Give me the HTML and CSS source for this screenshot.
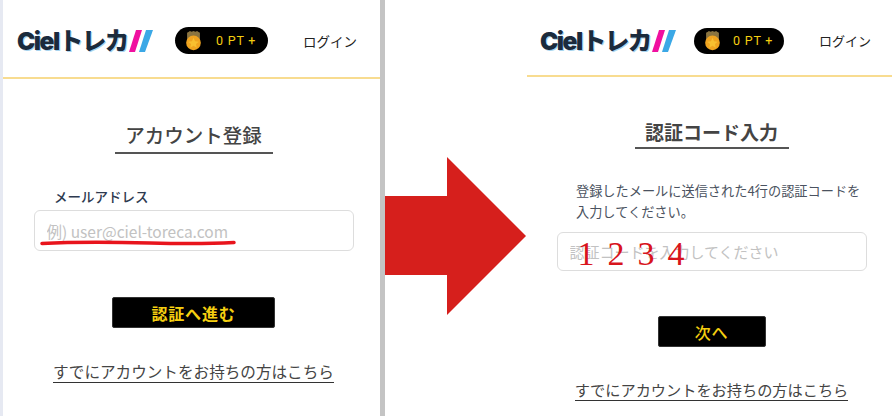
FILE: index.html
```html
<!DOCTYPE html>
<html lang="ja">
<head>
    <meta charset="UTF-8">
    <meta name="viewport" content="width=device-width, initial-scale=1.0">
    <title>Cielトレカ アカウント登録</title>
    <link rel="stylesheet" href="styles.css">
</head>
<body>
    <div class="stage">
        <section class="panel panel-left">
            <header class="site-header">
                <div class="logo">
                    <span class="logo-text">Cielトレカ</span>
                    <svg class="logo-slashes" viewBox="0 0 24 22"><polygon points="7,0 13,0 6,22 0,22" fill="#f010a0"/><polygon points="17,0 24,0 16,22 10,22" fill="#3ba8e6"/></svg>
                </div>
                <div class="points">
                    <svg class="coin" viewBox="0 0 18 24"><path d="M2 12 L2 3 L4 2 L5 1 L7 2 L9 1 L11 2 L13 1 L14 2 L16 3 L16 12 Z" fill="#8a7440"/><circle cx="9" cy="14" r="8" fill="#f0a420"/><polygon points="9,8.500 10.700,12.300 14.800,12.700 11.700,15.400 12.600,19.400 9,17.300 5.400,19.400 6.300,15.400 3.200,12.700 7.300,12.300" fill="#f8c030"/></svg>
                    <span class="points-text">0 PT +</span>
                </div>
                <a class="login">ログイン</a>
            </header>
            <main class="form">
                <h2 class="title">アカウント登録</h2>
                <label class="label">メールアドレス</label>
                <div class="field">
                    <input class="input" type="text" placeholder="例) user@ciel-toreca.com">
                    <svg class="scribble" viewBox="0 0 196 6"><path d="M2 3.500 C40 1.500 70 2 110 3 C140 3.800 170 3.800 194 2.500" fill="none" stroke="#e8141c" stroke-width="3.500" stroke-linecap="round"/></svg>
                </div>
                <button class="submit">認証へ進む</button>
                <a class="link">すでにアカウントをお持ちの方はこちら</a>
            </main>
        </section>

        <section class="panel panel-right">
            <header class="site-header">
                <div class="logo">
                    <span class="logo-text">Cielトレカ</span>
                    <svg class="logo-slashes" viewBox="0 0 24 22"><polygon points="7,0 13,0 6,22 0,22" fill="#f010a0"/><polygon points="17,0 24,0 16,22 10,22" fill="#3ba8e6"/></svg>
                </div>
                <div class="points">
                    <svg class="coin" viewBox="0 0 18 24"><path d="M2 12 L2 3 L4 2 L5 1 L7 2 L9 1 L11 2 L13 1 L14 2 L16 3 L16 12 Z" fill="#8a7440"/><circle cx="9" cy="14" r="8" fill="#f0a420"/><polygon points="9,8.500 10.700,12.300 14.800,12.700 11.700,15.400 12.600,19.400 9,17.300 5.400,19.400 6.300,15.400 3.200,12.700 7.300,12.300" fill="#f8c030"/></svg>
                    <span class="points-text">0 PT +</span>
                </div>
                <a class="login">ログイン</a>
            </header>
            <main class="form">
                <h2 class="title">認証コード入力</h2>
                <p class="note">登録したメールに送信された4行の認証コードを<br>入力してください。</p>
                <div class="field">
                    <input class="input" type="text" placeholder="認証コードを入力してください">
                    <div class="digits"><span>1</span><span>2</span><span>3</span><span>4</span></div>
                </div>
                <button class="submit">次へ</button>
                <a class="link">すでにアカウントをお持ちの方はこちら</a>
            </main>
        </section>

        <svg class="arrow" viewBox="0 0 141 158"><polygon points="0,39 62,39 62,0 141,79 62,158 62,118 0,118" fill="#d61f1c"/></svg>
    </div>
</body>
</html>
```

FILE: styles.css
```css
* {
    margin: 0;
    padding: 0;
    box-sizing: border-box;
}

body {
    background: #ffffff;
    color: #444444;
    font-family: "Noto Sans CJK JP", "Noto Sans", sans-serif;
    overflow: hidden;
}

.stage {
    position: relative;
    display: flex;
    justify-content: space-between;
    width: 892px;
    height: 416px;
    overflow: hidden;
    border-left: 3px solid #e6e9f2;
}

.panel {
    height: 416px;
}

.panel-left {
    width: 382px;
    border-right: 5px solid #c4c4c4;
}

.panel-right {
    width: 365px;
}

/* header */
.site-header {
    display: flex;
    align-items: center;
    height: 79px;
    border-bottom: 2px solid #f8dc90;
    padding: 4px 0 0 14px;
}

.panel-right .site-header {
    height: 77px;
    padding: 6px 0 0 13px;
}

.logo {
    display: flex;
    align-items: center;
    width: 136px;
}

.panel-right .logo {
    width: 133px;
}

.logo-text {
    color: #1b2b3c;
    font-family: "Inter", "Noto Sans CJK JP", sans-serif;
    font-size: 24.500px;
    font-weight: 900;
    line-height: 24px;
    letter-spacing: -1.500px;
    white-space: nowrap;
    text-shadow: 1px 1px 0 #a8d4ee;
}

.logo-slashes {
    width: 24px;
    height: 22px;
    margin-left: 1px;
    flex-shrink: 0;
}

.points {
    display: flex;
    align-items: center;
    width: 93px;
    height: 27px;
    margin-left: 22px;
    padding-left: 10px;
    background: #000000;
    border-radius: 14px;
}

.panel-right .points {
    width: 90px;
    height: 26px;
    margin-left: 21px;
}

.coin {
    width: 17px;
    height: 22px;
}

.points-text {
    margin-left: 14px;
    color: #f5cf10;
    font-family: "Roboto", sans-serif;
    font-size: 12.500px;
    letter-spacing: 0.800px;
    white-space: pre;
}

.panel-right .points-text {
    margin-left: 12px;
}

.login {
    margin-left: 35px;
    color: #222222;
    font-size: 13.500px;
    white-space: nowrap;
}

.panel-right .login {
    font-size: 13px;
}

/* form */
.form {
    display: flex;
    flex-direction: column;
    align-items: center;
    padding: 41px 0 0 4px;
}

.panel-right .form {
    padding-top: 40px;
}

.title {
    width: 158px;
    padding-bottom: 3px;
    border-bottom: 2px solid #555555;
    font-size: 19.500px;
    font-weight: 500;
    line-height: 29px;
    text-align: center;
    white-space: nowrap;
}

.panel-right .title {
    width: 154px;
    padding-bottom: 1px;
    font-weight: 700;
    font-size: 19px;
}

.label {
    align-self: flex-start;
    margin: 32px 0 4px 47px;
    color: #2e3a50;
    font-size: 13.500px;
    font-weight: 500;
    line-height: 20px;
}

.note {
    align-self: flex-start;
    margin: 31px 0 10px 45px;
    color: #4a5260;
    font-size: 13.200px;
    line-height: 21px;
    white-space: nowrap;
}

.field {
    position: relative;
    width: 320px;
    height: 41px;
}

.panel-right .field {
    width: 310px;
    height: 39px;
}

.input {
    display: block;
    width: 100%;
    height: 100%;
    padding: 0 12px;
    border: 1px solid #dddddd;
    border-radius: 6px;
    background: #ffffff;
    font-family: inherit;
    font-size: 15.500px;
    outline: none;
}

.panel-right .input {
    font-size: 15px;
}

.input::placeholder {
    color: #c2c2c2;
}

.scribble {
    position: absolute;
    left: 6px;
    top: 30px;
    width: 196px;
    height: 6px;
}

.digits {
    position: absolute;
    left: 21px;
    top: 2px;
    display: flex;
    gap: 13px;
    color: #d8141c;
    font-family: "Liberation Serif", serif;
    font-size: 34px;
    line-height: 40px;
}

.submit {
    width: 163px;
    height: 31px;
    margin-top: 46px;
    border: 1px solid #333333;
    border-radius: 2px;
    background: #000000;
    color: #f5cf10;
    font-family: inherit;
    font-size: 16px;
    font-weight: 700;
    letter-spacing: 0.800px;
}

.panel-right .submit {
    width: 108px;
    margin-top: 45px;
    font-weight: 500;
}

.link {
    margin-top: 32px;
    border-bottom: 1px solid #333333;
    color: #444444;
    font-size: 15.600px;
    line-height: 22px;
    white-space: nowrap;
}

.panel-right .link {
    margin-top: 31px;
    font-size: 15.200px;
}

.arrow {
    position: absolute;
    left: 382px;
    top: 157px;
    width: 141px;
    height: 158px;
}
```
